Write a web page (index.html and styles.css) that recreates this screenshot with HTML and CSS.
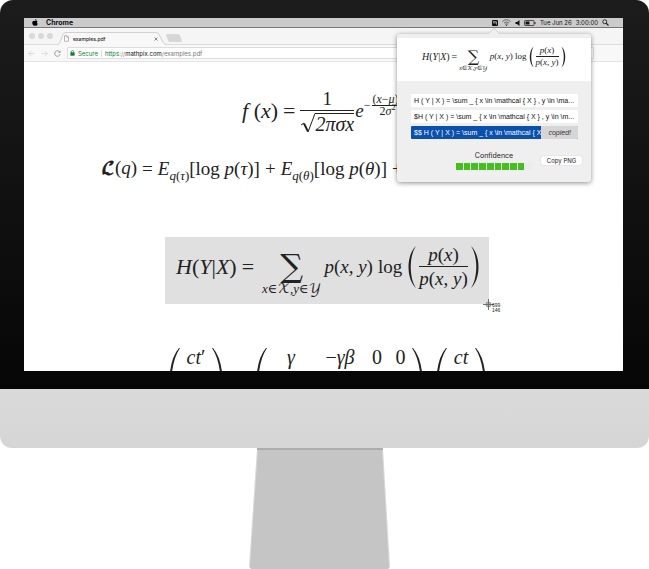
FILE: index.html
```html
<!DOCTYPE html>
<html lang="en">
<head>
<meta charset="utf-8">
<title>Mathpix on the desktop</title>
<link rel="stylesheet" href="styles.css">
</head>
<body>
<div class="computer">
  <div class="bezel">
    <div class="screen">
      <header class="menubar">
        <svg class="apple" viewBox="0 0 14 16"><path d="M10 0c.1 1.600-1.200 3.300-3 3.300C6.900 1.700 8.300.2 10 0zM7.200 4.400c.7 0 1.700-.8 3-.8 1 0 2.200.5 2.900 1.600-2.500 1.500-2.100 4.900.5 5.900-.6 1.700-2 4.400-3.500 4.400-1 0-1.500-.7-2.800-.7s-1.800.7-2.800.7C2.600 15.500.6 11.900.6 8.800c0-3.200 2-5 4-5 1.100 0 2 .6 2.600.6z"/></svg>
        <strong>Chrome</strong>
        <div class="status">
          <svg class="m-icon" viewBox="0 0 14 14"><rect width="14" height="14" rx="2.500" fill="#111"/><path d="M3.500 3v5M3.500 4h3.500v5M7 4h3.500v7" fill="none" stroke="#ddd" stroke-width="1.500"/></svg>
          <svg class="wifi" viewBox="0 0 18 14"><path d="M1 5Q9-2 17 5M4 8q5-4 10 0M6.500 10.500q2.500-2 5 0" fill="none" stroke="#555" stroke-width="1.700"/><circle cx="9" cy="12.500" r="1.300" fill="#333"/></svg>
          <svg class="sound" viewBox="0 0 10 12"><path d="M1 4h3l5-4v12L4 8H1z" fill="#111"/></svg>
          <svg class="battery" viewBox="0 0 24 12"><rect x="1" y="1" width="19" height="10" rx="1.500" fill="none" stroke="#222" stroke-width="1.500"/><path d="M3 3h8v6H3z" fill="#111"/><path d="M22 4v4" stroke="#222" stroke-width="2"/></svg>
          <span>Tue Jun 26</span>
          <time>3:00:00</time>
          <svg class="search" viewBox="0 0 14 14"><circle cx="5.500" cy="5.500" r="4" fill="none" stroke="#222" stroke-width="1.800"/><path d="M8.500 8.500L13 13" stroke="#222" stroke-width="2.200"/></svg>
        </div>
      </header>

      <div class="tabs">
        <span class="light"></span><span class="light"></span><span class="light"></span>
        <div class="tab">
          <svg class="tab-shape" viewBox="0 0 112 14" preserveAspectRatio="none"><path d="M0 14Q2 13 3 11L6 3Q7 .5 9 .5H101Q103 .5 104 3L108 11Q109 13 112 14" fill="#f8f8f8" stroke="#ccc"/></svg>
          <svg class="file" viewBox="0 0 10 13"><path d="M1 1h5l3 3v8H1zM6 1v3h3" fill="#fff" stroke="#777"/></svg>
          <span>examples.pdf</span>
          <button class="close" aria-label="Close tab"><svg viewBox="0 0 8 8"><path d="M1 1l6 6M7 1L1 7" stroke="#666" stroke-width="1.500"/></svg></button>
        </div>
        <svg class="new-tab" viewBox="0 0 16 8"><path d="M1 .5h11q1 0 1.500 1l2 5q.3 1-1 1H4q-1 0-1.400-1L.6 1.500Q.3.500 1 .5z" fill="#d6d6d6" stroke="#ccc" stroke-width=".5"/></svg>
      </div>

      <nav class="toolbar">
        <svg class="nav-icon" viewBox="0 0 12 12"><path d="M11 6H1M5.500 1.500L1 6l4.500 4.500" fill="none" stroke="#d4d4d4" stroke-width="1.300"/></svg>
        <svg class="nav-icon" viewBox="0 0 12 12"><path d="M1 6h10M6.500 1.500L11 6l-4.500 4.500" fill="none" stroke="#d4d4d4" stroke-width="1.300"/></svg>
        <svg class="nav-icon" viewBox="0 0 12 12"><path d="M10.500 7A4.700 4.700 0 1 1 9.500 3" fill="none" stroke="#888" stroke-width="1.400"/><path d="M11 .8v4H7z" fill="#888"/></svg>
        <div class="address">
          <svg class="lock" viewBox="0 0 8 10"><path d="M1 4h6.500v5.500H.5V4z" fill="#0b8034"/><path d="M2 5V3q0-2 2-2t2 2v2" fill="none" stroke="#0b8034" stroke-width="1.200"/></svg>
          <span class="secure">Secure</span>
          <span class="url"><span class="scheme">https</span>://<b>mathpix.com</b>/examples.pdf</span>
        </div>
      </nav>

      <main class="paper">
        <div class="eq eq-gauss">
          <span class="lead"><i>f</i> (<i>x</i>)</span><span class="lead">=</span>
          <span class="frac">
            <span class="num">1</span>
            <span class="den root"><svg class="radical" viewBox="0 0 15 20" preserveAspectRatio="none"><path d="M1 12l3-2" stroke-width="1"/><path d="M4 10.500l4 8" stroke-width="2"/><path d="M8 19L15 .5" stroke-width="1"/></svg><i class="radicand">2πσx</i></span>
          </span>
          <span class="power"><i>e</i><span class="exponent">−<span class="frac"><span class="num">(<i>x</i>−<i>μ</i>)<sup>2</sup></span><span class="den">2<i>σ</i><sup>2</sup></span></span></span></span>
        </div>

        <div class="eq eq-loss">
          <span><span class="cal">𝓛</span>(<i>q</i>)</span><span>=</span>
          <span><i>E</i><sub><i>q</i>(<i>τ</i>)</sub>[log <i>p</i>(<i>τ</i>)]</span><span>+</span>
          <span><i>E</i><sub><i>q</i>(<i>θ</i>)</sub>[log <i>p</i>(<i>θ</i>)]</span><span>+</span>
        </div>

        <div class="selection">
          <div class="eq eq-entropy">
            <span class="lead"><i>H</i>(<i>Y</i>|<i>X</i>)</span><span class="lead">=</span>
            <span class="sum"><span class="sigma">∑</span><span class="under"><i>x</i>∈<span class="cal">𝒳</span>,<i>y</i>∈<span class="cal">𝒴</span></span></span>
            <span><i>p</i>(<i>x</i>, <i>y</i>)</span><span>log</span>
            <svg class="fence" viewBox="0 0 10 44" preserveAspectRatio="none"><path d="M9 1C-1 10-1 34 9 43C2 33 2 11 9 1z"/></svg>
            <span class="frac"><span class="num"><i>p</i>(<i>x</i>)</span><span class="den"><i>p</i>(<i>x</i>, <i>y</i>)</span></span>
            <svg class="fence" viewBox="0 0 10 44" preserveAspectRatio="none"><path d="M1 1C11 10 11 34 1 43C8 33 8 11 1 1z"/></svg>
          </div>
          <div class="crosshair">
            <svg viewBox="0 0 12 12"><circle cx="6" cy="6" r="2.700" fill="#bbb" stroke="#888"/><path d="M6 0v12M0 6h12" stroke="#666"/></svg>
            <span>699<br>146</span>
          </div>
        </div>

        <div class="matrices">
          <div class="matrix m-left"><svg class="fence" viewBox="0 0 10 44"><path d="M9 0Q2 8 0 24H2Q4 9 10 0z"/></svg><span><i>ct</i>′</span><svg class="fence" viewBox="0 0 10 44"><path d="M1 0Q8 8 10 24H8Q6 9 0 0z"/></svg></div>
          <div class="matrix m-mid"><svg class="fence" viewBox="0 0 10 44"><path d="M9 0Q2 8 0 24H2Q4 9 10 0z"/></svg><i>γ</i><span>−<i>γβ</i></span><span>0</span><span>0</span><svg class="fence" viewBox="0 0 10 44"><path d="M1 0Q8 8 10 24H8Q6 9 0 0z"/></svg></div>
          <div class="matrix m-right"><svg class="fence" viewBox="0 0 10 44"><path d="M9 0Q2 8 0 24H2Q4 9 10 0z"/></svg><i>ct</i><svg class="fence" viewBox="0 0 10 44"><path d="M1 0Q8 8 10 24H8Q6 9 0 0z"/></svg></div>
        </div>
      </main>

      <aside class="popover">
        <svg class="arrow" viewBox="0 0 12 6"><path d="M0 6L5 1q1-1 2 0l5 5z" fill="#efefef"/><path d="M0 6L5 1q1-1 2 0l5 5" fill="none" stroke="#bbb" stroke-width=".5"/></svg>
        <div class="preview">
          <div class="eq eq-small">
            <span class="lead"><i>H</i>(<i>Y</i>|<i>X</i>)</span><span class="lead">=</span>
            <span class="sum"><span class="sigma">∑</span><span class="under"><i>x</i>∈<span class="cal">𝒳</span>,<i>y</i>∈<span class="cal">𝒴</span></span></span>
            <span><i>p</i>(<i>x</i>, <i>y</i>) log</span>
            <svg class="fence" viewBox="0 0 10 44" preserveAspectRatio="none"><path d="M9 1C-1 10-1 34 9 43C3 33 3 11 9 1z"/></svg>
            <span class="frac"><span class="num"><i>p</i>(<i>x</i>)</span><span class="den"><i>p</i>(<i>x</i>, <i>y</i>)</span></span>
            <svg class="fence" viewBox="0 0 10 44" preserveAspectRatio="none"><path d="M1 1C11 10 11 34 1 43C7 33 7 11 1 1z"/></svg>
          </div>
        </div>
        <div class="results">
          <button class="result"><span class="code">H ( Y | X ) = \sum _ { x \in \mathcal { X } , y \in \ma...</span></button>
          <button class="result"><span class="code">$H ( Y | X ) = \sum _ { x \in \mathcal { X } , y \in \m...</span></button>
          <button class="result selected"><span class="code">$$ H ( Y | X ) = \sum _ { x \in \mathcal { X</span><em>copied!</em></button>
        </div>
        <div class="foot">
          <div class="confidence">
            <span>Confidence</span>
            <div class="bar"><b></b><b></b><b></b><b></b><b></b><b></b><b></b><b></b><b></b><b class="off"></b></div>
          </div>
          <button class="copy">Copy PNG</button>
        </div>
      </aside>
    </div>
  </div>
  <div class="chin"></div>
  <div class="base">
    <svg class="stand" viewBox="0 0 142 121"><path d="M8 0H134L141 118Q141 121 138 121H4Q0 121 0 118z" fill="#dadada"/><path d="M9 0H133L140 119Q140 121 138 121H4Q1 121 1 119z" fill="#c5c5c5"/><path d="M8 0H134V2H8z" fill="#acacac"/></svg>
  </div>
</div>
</body>
</html>
```
FILE: styles.css
```css
* { box-sizing: border-box; }
body {
  margin: 0;
  background: #fff;
  color: #222;
  font-family: Inter, "Liberation Sans", sans-serif;
  font-size: 6px;
  overflow: hidden;
}
button { font: inherit; color: inherit; border: 0; padding: 0; background: none; }
svg { display: block; flex: none; }

.computer { display: flex; flex-direction: column; }
.bezel {
  padding: 18px 26px 18px 24px;
  border-radius: 13px 13px 0 0;
  background: linear-gradient(#1c1c1c, #060606);
}
.chin {
  height: 59px;
  border-radius: 0 0 12px 12px;
  background: linear-gradient(#dadada, #d5d5d5);
}
.base { display: flex; justify-content: center; padding-right: 10px; }
.stand { width: 142px; height: 121px; }
.screen { position: relative; background: #fff; aspect-ratio: 599 / 353; overflow: hidden; }

.menubar {
  display: flex;
  align-items: center;
  height: 10px;
  padding: 0 14px 0 8px;
  background: #cbcbcb;
  border-bottom: 1px solid #777;
  color: #111;
}
.menubar strong { font-size: 7px; margin-left: 8px; }
.apple { width: 6px; height: 7px; }
.status { display: flex; align-items: center; gap: 4px; margin-left: auto; }
.m-icon { width: 6px; height: 6px; }
.wifi { width: 9px; height: 7px; }
.sound { width: 5px; height: 6px; }
.battery { width: 12px; height: 6px; }
.search { width: 7px; height: 7px; }

.tabs {
  display: flex;
  align-items: flex-end;
  gap: 3px;
  height: 17px;
  padding-left: 5px;
  background: #f5f5f5;
  border-bottom: 1px solid #ddd;
}
.light { width: 6px; height: 6px; border-radius: 50%; background: #d9d9d9; margin-bottom: 5px; }
.tab {
  position: relative;
  display: flex;
  align-items: center;
  gap: 4px;
  width: 110px;
  height: 13px;
  margin: 0 0 -1px 1px;
  padding: 0 9px 0 7px;
  font-size: 5px;
  font-weight: 500;
}
.tab-shape { position: absolute; inset: 0; width: 100%; height: 100%; }
.tab > :not(.tab-shape) { position: relative; }
.file { width: 5px; height: 7px; }
.close { margin-left: auto; }
.close svg { width: 4px; height: 4px; }
.new-tab { width: 16px; height: 8px; margin: 0 0 2px -4px; }

.toolbar {
  display: flex;
  align-items: center;
  gap: 6px;
  height: 17px;
  padding: 0 29px 0 4px;
  background: #f8f8f8;
  border-bottom: 1px solid #e4e4e4;
}
.nav-icon { width: 7px; height: 7px; }
.address {
  flex: 1;
  display: flex;
  align-items: center;
  gap: 3px;
  height: 12px;
  padding: 0 2px;
  border: 1px solid #ddd;
  border-radius: 1px;
  background: #fff;
}
.lock { width: 5px; height: 6px; }
.secure { color: #0b8034; border-right: 1px solid #ddd; padding-right: 3px; }
.url { color: #777; }
.scheme { color: #0b8034; }
.url b { font-weight: 400; color: #111; }

.paper { font-family: "Liberation Serif", "DejaVu Serif", serif; }
.eq { display: flex; align-items: center; font-size: 19px; line-height: 23px; white-space: nowrap; }
.eq sub, .eq sup { font-size: 13px; line-height: 0; }
.lead { font-size: 22px; }
.cal { font-family: "DejaVu Math TeX Gyre", "DejaVu Sans", serif; }
.eq-loss .cal { font-size: 16px; }
.frac { display: inline-flex; flex-direction: column; align-items: center; }
.num { border-bottom: 1px solid #222; align-self: stretch; text-align: center; }
.fence { fill: #222; }

.eq-gauss { height: 70px; margin-top: 13px; padding-left: 218px; gap: 5px; }
.root { display: flex; margin-top: 2px; }
.radical { width: 15px; height: 20px; fill: none; stroke: #222; }
.radicand { border-top: 1px solid #222; line-height: 20px; font-size: 20px; }
.power { display: flex; margin-left: -4px; }
.exponent { display: flex; align-items: center; gap: 2px; font-size: 12px; line-height: 11px; margin-top: -10px; }
.eq .exponent sup { font-size: 8px; }

.eq-loss { height: 24px; margin-top: 11px; padding-left: 77px; gap: 5px; }

.selection {
  position: relative;
  width: 324px;
  height: 67px;
  margin: 57px 0 0 141px;
  background: #e0e0e0;
}
.eq-entropy { height: 59px; padding-left: 11px; gap: 5px; }
.sum { display: flex; flex-direction: column; align-items: center; }
.eq-entropy .sum { margin: 0 -2px 0 3px; }
.sigma { font-family: "DejaVu Serif", serif; font-size: 32px; line-height: 32px; margin-top: 13px; }
.under { font-size: 13px; line-height: 14px; }
.eq-entropy .fence { width: 10px; height: 44px; }
.eq-entropy .fence + .frac { margin: 0 -3px; }
.crosshair { position: absolute; left: 318px; top: 62px; display: flex; }
.crosshair svg { width: 11px; height: 11px; }
.crosshair span { font: 5px/5px "Liberation Sans", sans-serif; margin: 4px 0 0 -2px; }

.matrices { display: flex; margin: 42px 0 0 146px; font-size: 20px; line-height: 22px; }
.matrix { display: flex; justify-content: space-between; }
.matrix .fence { width: 10px; height: 44px; margin-top: 2px; }
.m-left { width: 52px; }
.m-mid {
  display: grid;
  grid-template-columns: 10px 48px 50px 24px 23px 10px;
  justify-items: center;
  margin-left: 35px;
}
.m-right { width: 48px; margin-left: 15px; }

.popover {
  position: absolute;
  top: 16px;
  right: 32px;
  width: 194px;
  padding: 4px 0 12px;
  border-radius: 3px;
  background: #efefef;
  box-shadow: 0 1px 5px rgba(0, 0, 0, .45);
}
.arrow { position: absolute; left: 91px; top: -6px; width: 12px; height: 6px; }
.preview { height: 43px; padding-left: 25px; background: #fff; }
.eq-small {
  height: 37px;
  gap: 2px;
  font-family: "Liberation Serif", serif;
  font-size: 9px;
  line-height: 11px;
}
.eq-small .lead { font-size: 10px; }
.eq-small .sigma { font-size: 16px; line-height: 16px; margin-top: 7px; }
.eq-small .under { font-size: 6px; line-height: 7px; }
.eq-small .fence { width: 5px; height: 22px; }
.results { display: flex; flex-direction: column; gap: 3px; padding: 13px 13px 0 14px; }
.result {
  display: flex;
  width: 100%;
  height: 13px;
  line-height: 13px;
  border-radius: 1px;
  overflow: hidden;
  background: #fff;
  color: #111;
  font-family: "Liberation Sans", sans-serif;
  font-size: 7px;
  text-align: left;
}
.code { flex: 1; padding-left: 3px; white-space: nowrap; }
.selected { background: #0a50ac; color: #fff; }
.result em { width: 37px; background: #d6d6d6; color: #333; text-align: center; }
.foot { display: flex; align-items: center; padding: 12px 9px 0 59px; }
.confidence { font-size: 7px; line-height: 9px; text-align: center; }
.bar { display: flex; gap: 1px; width: 76px; margin-top: 3px; }
.bar b { flex: 1; height: 7px; background: #43c01c; }
.bar .off { background: #ebebeb; }
.copy {
  margin-left: auto;
  width: 41px;
  height: 9px;
  border-radius: 2px;
  background: #fff;
  box-shadow: 0 0 1px #aaa;
  font-size: 6px;
}
```
